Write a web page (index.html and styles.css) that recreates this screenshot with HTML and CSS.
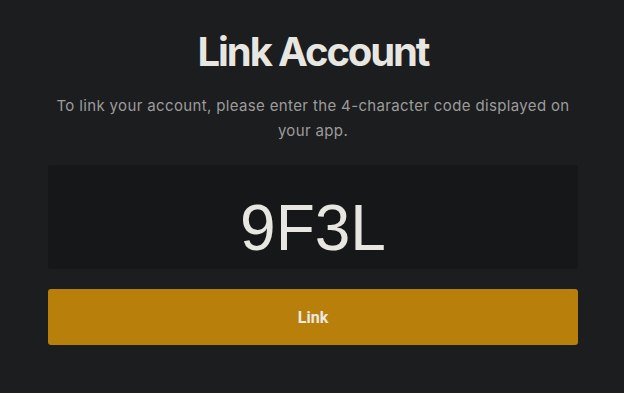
FILE: index.html
```html
<!DOCTYPE html>
<html>
<head>
<meta charset="utf-8">
<link rel="stylesheet" href="styles.css">
</head>
<body>
<main class="panel">
  <h1 class="title">Link Account</h1>
  <p class="desc">To link your account, please enter the 4-character code displayed on your app.</p>
  <div class="code-box"><span class="code">9F3L</span></div>
  <button class="link-btn">Link</button>
</main>
</body>
</html>
```
FILE: styles.css
```css
html, body {
  margin: 0;
  padding: 0;
  background: #1c1d1f;
  height: 100%;
}
.panel {
  width: 530px;
  margin: 0 46px 0 48px;
  padding-top: 27px;
  display: flex;
  flex-direction: column;
  align-items: stretch;
}
.title {
  margin: 0;
  text-align: center;
  font-family: Inter, sans-serif;
  font-weight: 700;
  font-size: 40px;
  letter-spacing: -2.1px;
  line-height: 50px;
  color: #e8e6e1;
}
.desc {
  margin: 16px 0 0;
  text-align: center;
  font-family: Inter, sans-serif;
  font-size: 15px;
  letter-spacing: 0.36px;
  line-height: 25px;
  color: #9c9c9c;
}
.code-box {
  margin-top: 22px;
  height: 104px;
  background: #161719;
  border-radius: 3px;
  display: flex;
  align-items: center;
  justify-content: center;
}
.code {
  font-family: "Liberation Sans", Arial, sans-serif;
  font-size: 64px;
  color: #e8e6e1;
  padding-top: 22px;
  line-height: 1;
}
.link-btn {
  margin-top: 20px;
  height: 56px;
  border: none;
  border-radius: 3px;
  background: #b8800b;
  color: #ece9e4;
  font-family: Roboto, sans-serif;
  font-weight: 700;
  font-size: 16px;
}
```
